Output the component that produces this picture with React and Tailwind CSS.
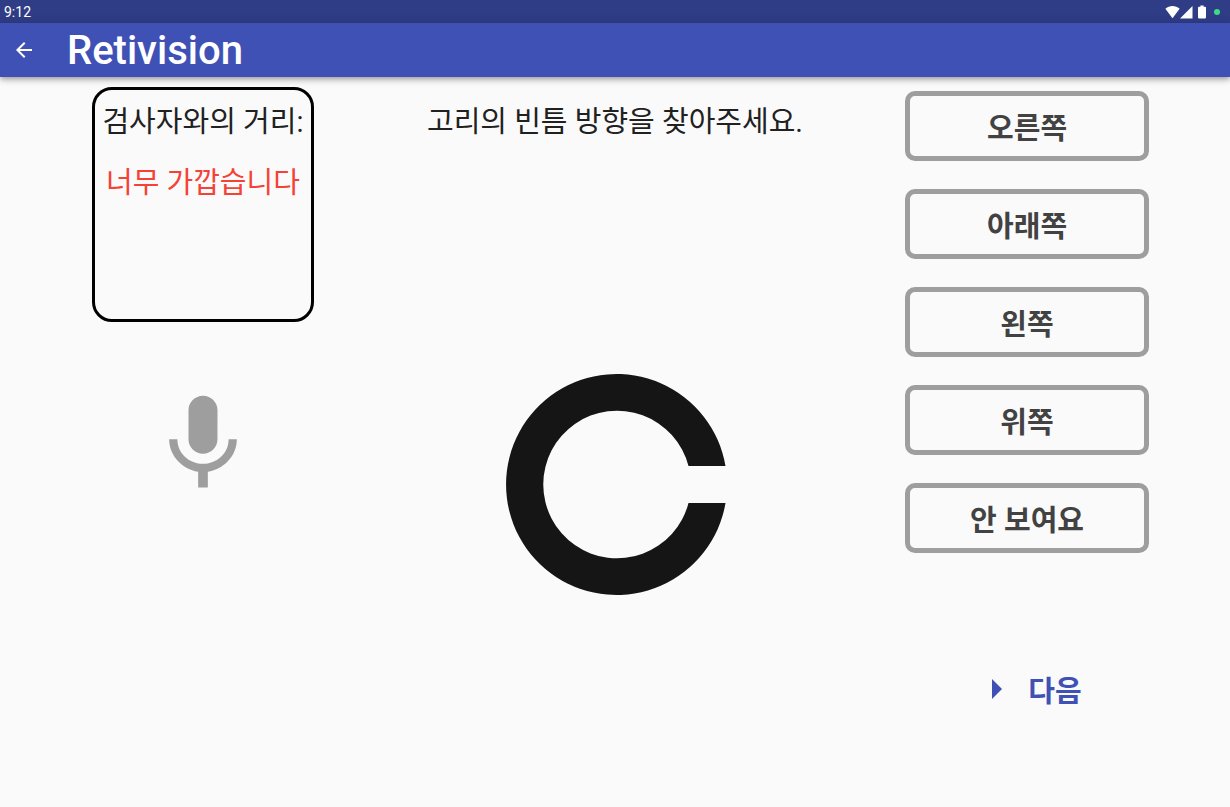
import React from "react";

const directions = ["오른쪽", "아래쪽", "왼쪽", "위쪽", "안 보여요"];

function StatusBar() {
  return (
    <div className="flex h-[23px] items-center justify-between bg-[#2f3c86] pl-1 pr-[10px] text-white">
      <span className="pt-[2px] text-[14px] leading-[21px]">9:12</span>
      <div className="flex items-center">
        <svg className="h-[14px] w-[15px]" viewBox="0 0 15 14" fill="currentColor" aria-hidden="true">
          <path d="M7.5 13.2 L0.4 3.7 C2.5 1.8 5 1 7.5 1 C10 1 12.5 1.8 14.6 3.7 Z" />
        </svg>
        <svg className="h-[14px] w-[14px]" viewBox="0 0 14 14" fill="currentColor" aria-hidden="true">
          <path d="M12.5 1 V13.5 H0 Z" />
        </svg>
        <svg className="ml-1 h-[14px] w-[8px]" viewBox="0 0 8 14" fill="currentColor" aria-hidden="true">
          <path d="M2.4 0.5 H5.6 V1.8 H7 Q8 1.8 8 2.8 V12.6 Q8 13.6 7 13.6 H1 Q0 13.6 0 12.6 V2.8 Q0 1.8 1 1.8 H2.4 Z" />
        </svg>
        <span className="ml-2 size-[6px] rounded-full bg-[#3ddc84]" />
      </div>
    </div>
  );
}

function AppBar() {
  return (
    <header className="relative flex h-[54px] items-center bg-[#3f51b5] text-white shadow-[0_2px_4px_-1px_rgba(0,0,0,0.2),0_4px_5px_rgba(0,0,0,0.14),0_1px_10px_rgba(0,0,0,0.12)]">
      <button type="button" aria-label="뒤로" className="flex w-12 items-center justify-center self-stretch">
        <svg className="size-6" viewBox="0 0 24 24" fill="currentColor" aria-hidden="true">
          <path d="M20 11H7.83l5.59-5.59L12 4l-8 8 8 8 1.41-1.41L7.83 13H20v-2z" />
        </svg>
      </button>
      <h1 className="ml-[19px] pt-[2px] text-[40px] font-medium leading-[52px]">Retivision</h1>
    </header>
  );
}

function DistancePanel() {
  return (
    <section className="flex flex-col items-center pt-[10px]">
      <div className="h-[235px] w-[222px] rounded-[20px] border-[3px] border-black pt-[11px] text-center text-[29px] leading-[42px] whitespace-nowrap">
        <p>검사자와의 거리:</p>
        <p className="mt-[19px] text-[#f44336]">너무 가깝습니다</p>
      </div>
      <svg className="mt-16 size-[116px] text-[#9e9e9e]" viewBox="0 0 24 24" fill="currentColor" aria-hidden="true">
        <path d="M12 14c1.66 0 2.99-1.34 2.99-3L15 5c0-1.66-1.34-3-3-3S9 3.34 9 5v6c0 1.66 1.34 3 3 3zm5.3-3c0 3-2.54 5.1-5.3 5.1S6.7 14 6.7 11H5c0 3.41 2.72 6.23 6 6.72V21h2v-3.28c3.28-.48 6-3.3 6-6.72h-1.7z" />
      </svg>
    </section>
  );
}

function LandoltRing() {
  return (
    <svg className="mt-[230px] h-[224px] w-[224px]" viewBox="0 0 224 224" fill="#151515" role="img" aria-label="고리">
      <path d="M222.5 93 A110.5 110.5 0 1 0 222.5 130 H185.5 A73.8 73.8 0 1 1 185.5 93 Z" />
    </svg>
  );
}

function AnswerPanel() {
  return (
    <section className="flex flex-col items-center pt-[14px] text-[29px] font-bold">
      <div className="flex w-[244px] flex-col gap-7">
        {directions.map((label) => (
          <button
            key={label}
            type="button"
            className="h-[70px] rounded-[10px] border-[5px] border-[#9e9e9e] pt-[5px] leading-[42px] text-[#424242]"
          >
            {label}
          </button>
        ))}
      </div>
      <button type="button" className="mt-28 flex items-center gap-2 text-[#3f51b5]">
        <svg className="size-12" viewBox="0 0 24 24" fill="currentColor" aria-hidden="true">
          <path d="M10 17l5-5-5-5v10z" />
        </svg>
        <span className="pt-[5px] leading-[42px]">다음</span>
      </button>
    </section>
  );
}

export default function App() {
  return (
    <div className="flex min-h-screen flex-col bg-[#fafafa] font-[Roboto,'Noto_Sans_CJK_KR',sans-serif] text-[#212121]">
      <StatusBar />
      <AppBar />
      <main className="grid grow grid-cols-[33fr_34fr_33fr]">
        <DistancePanel />
        <section className="flex flex-col items-center pt-6">
          <p className="text-[29px] leading-[42px] whitespace-nowrap">고리의 빈틈 방향을 찾아주세요.</p>
          <LandoltRing />
        </section>
        <AnswerPanel />
      </main>
    </div>
  );
}
